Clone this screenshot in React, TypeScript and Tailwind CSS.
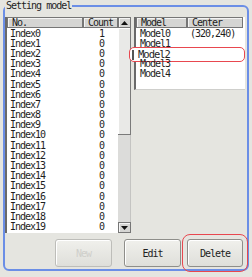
const indexRows = Array.from({ length: 20 }, (_, i) => ({ name: `Index${i}`, count: i === 0 ? 1 : 0 }));
const modelRows = [
  { name: 'Model0', center: '(320,240)' },
  { name: 'Model1', center: '' },
  { name: 'Model2', center: '' },
  { name: 'Model3', center: '' },
  { name: 'Model4', center: '' },
];

const headCell = 'h-[11px] bg-[#d5d5d3] border border-[#767676] shadow-[inset_1px_1px_0_#f4f4f4] pl-[4px] leading-[9px]';

function ScrollButton({ up }: { up?: boolean }) {
  return (
    <div className="flex h-[11px] items-center justify-center border border-[#767676] bg-[#d5d5d3] shadow-[inset_1px_1px_0_#f4f4f4]">
      <svg width="7" height="4" viewBox="0 0 7 4">
        {up ? <path d="M0 4 L3.5 0 L7 4 Z" fill="#111" /> : <path d="M0 0 L3.5 4 L7 0 Z" fill="#111" />}
      </svg>
    </div>
  );
}

function IndexList() {
  return (
    <div className="flex h-[216px] w-[126px] border-l-2 border-[#6a6a6a] bg-white">
      <div className="flex flex-1 flex-col">
        <div className="flex">
          <div className={`w-[76px] ${headCell}`}>No.</div>
          <div className={`flex-1 ${headCell}`}>Count</div>
        </div>
        {indexRows.map((r) => (
          <div key={r.name} className="flex h-[10.2px] items-center">
            <div className="w-[76px] pl-[3px]">{r.name}</div>
            <div className="flex-1 pl-[2px] text-center">{r.count}</div>
          </div>
        ))}
      </div>
      <div className="flex w-[13px] flex-col bg-[#dcdcda]">
        <ScrollButton up />
        <div className="h-[107px] border-r border-b border-[#7a7a7a] bg-[#e9e9e7] shadow-[inset_1px_1px_0_#fff]" />
        <div className="flex-1 border-r border-[#c4c4c2]" />
        <ScrollButton />
      </div>
    </div>
  );
}

function ModelList() {
  return (
    <div className="flex h-[73px] w-[111px] flex-col border-l-2 border-b border-[#6a6a6a] border-b-[#cfcfcc] bg-white">
      <div className="flex pr-[2px]">
        <div className={`w-[51px] ${headCell}`}>Model</div>
        <div className={`flex-1 ${headCell}`}>Center</div>
      </div>
      {modelRows.map((r) => (
        <div key={r.name} className="relative flex h-[10.2px] items-center">
          <div className="w-[51px] pl-[4px]">{r.name}</div>
          <div className="flex-1 pl-[3px]">{r.center}</div>
          {r.name === 'Model2' && (
            <div className="absolute -left-[7px] right-0 -top-[1px] flex h-[15px] items-center rounded-[5px] border border-[#e8474f] bg-white pl-[2px]">
              <div className="h-[10px] w-[2px] bg-[#555]" />
              <div className="pl-[4px] text-[10.5px]">Model2</div>
            </div>
          )}
        </div>
      ))}
    </div>
  );
}

function Btn({ label, disabled, marked, className }: { label: string; disabled?: boolean; marked?: boolean; className?: string }) {
  return (
    <button
      className={`h-[28px] rounded-[3px] border bg-gradient-to-b from-[#f0f0ec] to-[#dfdfda] shadow-[inset_1px_1px_0_#fff] ${
        disabled ? 'border-[#bdbdb9] text-[#cfcfcb]' : 'border-[#8e8e8a] text-[#222]'
      } ${marked ? 'outline outline-1 outline-offset-[4px] outline-[#e8474f]' : ''} ${className ?? ''}`}
    >
      {label}
    </button>
  );
}

export default function App() {
  return (
    <div className="h-[277px] w-[252px] overflow-hidden bg-[#e5e5e0] pt-0 font-['DejaVu_Sans_Mono',monospace] text-[10px] tracking-[-1px] text-[#1e1e1e]">
      <fieldset className="mx-[3px] h-[271px] rounded-[6px] border-2 border-[#6b8ee6]">
        <legend className="px-[1px] leading-[12px]">Setting model</legend>
        <div className="mt-[5px] flex gap-[3px]">
          <IndexList />
          <ModelList />
        </div>
        <div className="mt-[6px] flex">
          <Btn label="New" disabled className="ml-[50px] w-[57px]" />
          <Btn label="Edit" className="ml-[12px] w-[57px]" />
          <Btn label="Delete" marked className="ml-[6px] w-[56px]" />
        </div>
      </fieldset>
    </div>
  );
}
